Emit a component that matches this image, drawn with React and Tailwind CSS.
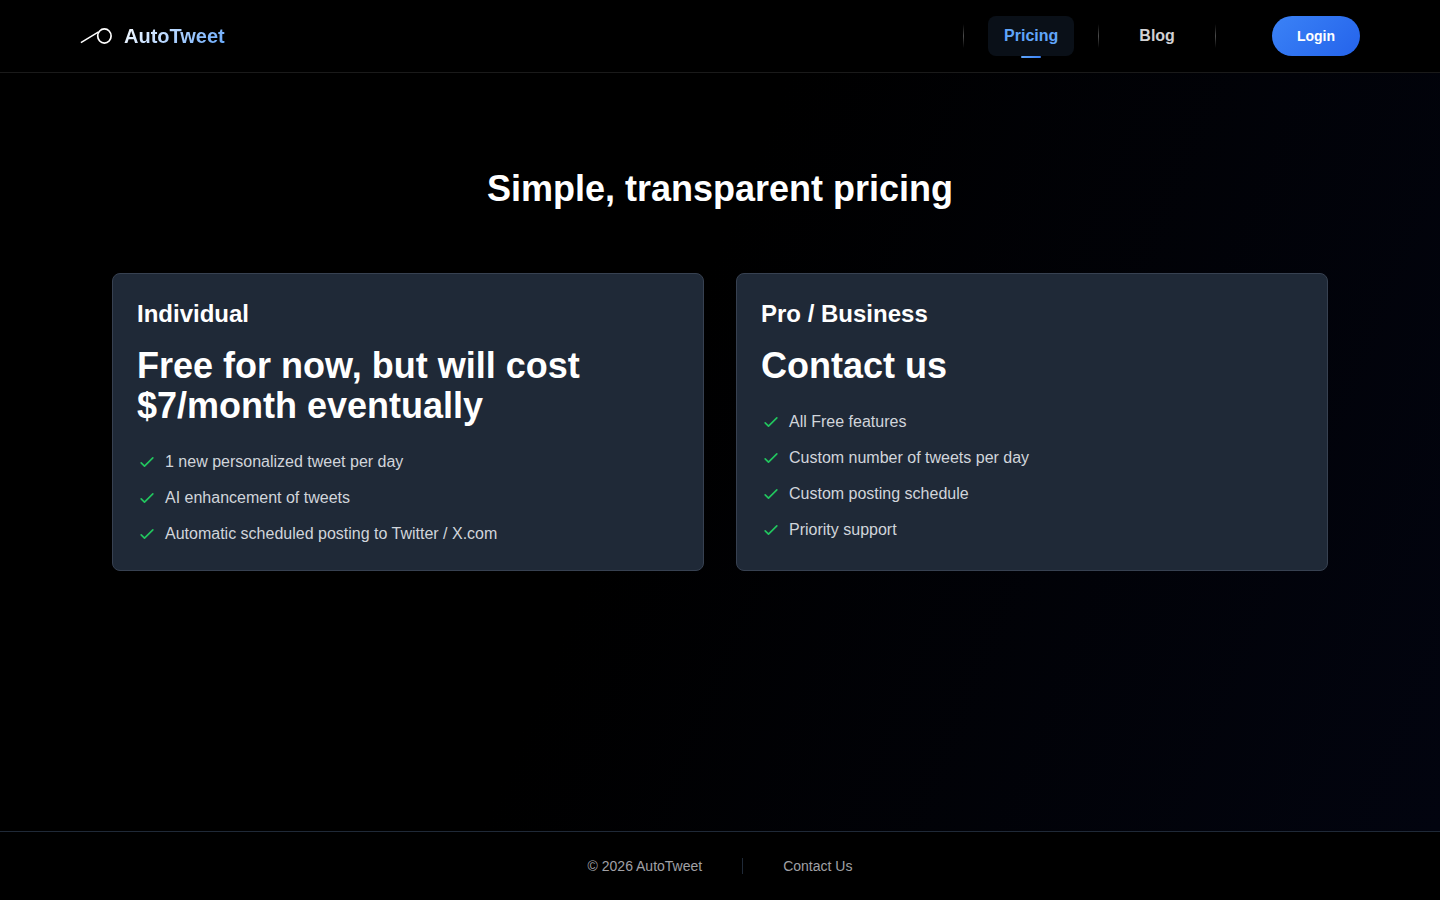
import React from 'react';

const plans = [
  {
    id: 'individual',
    name: 'Individual',
    price: 'Free for now, but will cost $7/month eventually',
    features: [
      '1 new personalized tweet per day',
      'AI enhancement of tweets',
      'Automatic scheduled posting to Twitter / X.com',
    ],
  },
  {
    id: 'business',
    name: 'Pro / Business',
    price: 'Contact us',
    features: [
      'All Free features',
      'Custom number of tweets per day',
      'Custom posting schedule',
      'Priority support',
    ],
  },
];

const Logo = () => (
  <svg viewBox="0 0 32 32" fill="none" stroke="white" strokeWidth="1.7" className="w-8 h-8">
    <ellipse cx="24.4" cy="16" rx="6.7" ry="7.1" />
    <path d="M0.9 22.7L18.6 11.8" strokeWidth="1.5" />
  </svg>
);

const CheckIcon = () => (
  <svg
    viewBox="0 0 24 24"
    fill="none"
    stroke="currentColor"
    strokeWidth="2"
    strokeLinecap="round"
    strokeLinejoin="round"
    className="w-5 h-5 text-[#22c55e]">
    <path d="M5 13l4 4L19 7" />
  </svg>
);

const Divider = () => (
  <div className="w-px h-6 bg-linear-to-b from-transparent via-white/30 to-transparent" />
);

const Header = () => (
  <header className="border-b border-white/10 bg-black">
    <div className="flex items-center justify-between h-18 px-6 md:px-20">
      <a href="/" className="flex items-center gap-3">
        <Logo />
        <span className="text-xl font-bold bg-linear-135 from-white to-[#60a5fa] bg-clip-text text-transparent">
          AutoTweet
        </span>
      </a>
      <div className="flex items-center gap-14">
        <nav className="flex items-center gap-6 font-semibold">
          <Divider />
          <a
            href="/pricing"
            aria-current="page"
            className="relative px-4 py-2 rounded-lg bg-[#0a1018] text-[#60a5fa]">
            Pricing
            <span className="absolute -bottom-0.5 left-1/2 -translate-x-1/2 w-5 h-0.5 rounded-xs bg-linear-to-r from-[#60a5fa] to-[#3b82f6]" />
          </a>
          <Divider />
          <a href="/blog" className="px-4 py-2 text-[#d1d1d4]">
            Blog
          </a>
          <Divider />
        </nav>
        <button
          type="button"
          className="h-10 px-6 border border-transparent bg-origin-border rounded-[20px] bg-linear-135 from-[#3b82f6] to-[#2563eb] text-sm font-semibold text-white cursor-pointer">
          Login
        </button>
      </div>
    </div>
  </header>
);

const PlanCard = ({ plan }) => (
  <div className="p-6 rounded-lg border border-[#374151] bg-[#1f2937]">
    <h2 className="text-2xl font-bold mb-4">{plan.name}</h2>
    <p className="text-4xl font-bold mb-6">{plan.price}</p>
    <ul className="flex flex-col gap-3 text-[#d1d5db]">
      {plan.features.map((feature) => (
        <li key={feature} className="flex items-center gap-2">
          <CheckIcon />
          {feature}
        </li>
      ))}
    </ul>
  </div>
);

const Footer = () => (
  <footer className="flex items-center justify-center gap-10 py-6 border-t border-[#1f2937] bg-black text-sm text-[#a1a1a6]">
    <p>© 2026 AutoTweet</p>
    <div className="w-px h-4 bg-[#1f2937]" />
    <a href="/contact">Contact Us</a>
  </footer>
);

const App = () => {
  return (
    <div className="flex flex-col min-h-screen bg-black text-white font-['Liberation_Sans',Arial,sans-serif]">
      <Header />
      <main className="grow px-4 py-24 bg-[linear-gradient(112deg,#000_45%,#02040f_100%)]">
        <div className="max-w-304 mx-auto">
          <h1 className="text-4xl font-bold text-center mb-16">Simple, transparent pricing</h1>
          <div className="grid md:grid-cols-2 gap-8">
            {plans.map((plan) => (
              <PlanCard key={plan.id} plan={plan} />
            ))}
          </div>
        </div>
      </main>
      <Footer />
    </div>
  );
};

export default App;
